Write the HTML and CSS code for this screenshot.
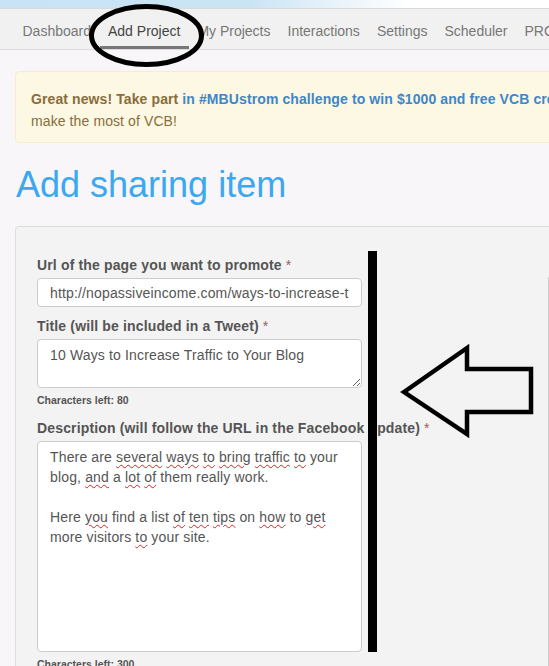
FILE: index.html
```html
<!DOCTYPE html>
<html lang="en">
<head>
  <meta charset="UTF-8">
  <title>Add sharing item</title>
  <link rel="stylesheet" href="styles.css">
</head>
<body>
  <div class="topstrip"></div>
  <nav class="menu">
    <ul>
      <li><a href="#">Dashboard</a></li>
      <li class="active"><a href="#">Add Project</a></li>
      <li><a href="#">My Projects</a></li>
      <li><a href="#">Interactions</a></li>
      <li><a href="#">Settings</a></li>
      <li><a href="#">Scheduler</a></li>
      <li><a href="#">PRO</a></li>
    </ul>
  </nav>

  <div class="page">
    <div class="notice">
      <b>Great news! Take part <a href="#">in #MBUstrom challenge to win $1000 and free VCB credits for the best tips on how to</a></b><br>
      make the most of VCB!
    </div>

    <h1>Add sharing item</h1>

    <div class="panel">
      <form class="form-col">
        <label>Url of the page you want to promote <span class="req">*</span></label>
        <input type="text" value="http://nopassiveincome.com/ways-to-increase-traffic-to-your-blog/">

        <label>Title (will be included in a Tweet) <span class="req">*</span></label>
        <textarea class="title-box">10 Ways to Increase Traffic to Your Blog</textarea>
        <div class="count">Characters left: 80</div>

        <label class="desc-label">Description (will follow the URL in the Facebook update) <span class="req">*</span></label>
        <div class="desc-box">
          There are <span class="typo">several</span> <span class="typo">ways</span> <span class="typo">to</span> <span class="typo">bring</span> <span class="typo">traffic</span> <span class="typo">to</span> your blog, <span class="typo">and</span> a <span class="typo">lot</span> <span class="typo">of</span> them really work.<br><br>
          Here <span class="typo">you</span> find a list <span class="typo">of</span> <span class="typo">ten</span> <span class="typo">tips</span> on <span class="typo">how</span> to <span class="typo">get</span> more visitors <span class="typo">to</span> your site.
        </div>
        <div class="count">Characters left: 300</div>
      </form>
      <div class="side-col">
        <div class="side-box"></div>
      </div>
    </div>
  </div>

  <!-- hand-drawn markup over the screenshot -->
  <svg class="marks" width="549" height="666" viewBox="0 0 549 666">
    <ellipse cx="146.5" cy="35.5" rx="55" ry="29" fill="none" stroke="#000" stroke-width="5"/>
    <rect x="368" y="251" width="9" height="401" fill="#000"/>
    <polygon points="404,392 467,348 467,369 531,369 531,412 467,412 467,434" fill="none" stroke="#000" stroke-width="4.5" stroke-linejoin="miter"/>
  </svg>
</body>
</html>
```

FILE: styles.css
```css
body {
  margin: 0;
  background: #f8f6f9;
  font-family: 'Liberation Sans', Arial, sans-serif;
  font-size: 14px;
  color: #555;
  overflow: hidden;
  position: relative;
}
.topstrip {
  height: 8px;
  background: linear-gradient(90deg, #c7e3f5 0%, #c9e4f5 45%, #e6f2fa 60%, #fff 75%);
}
.menu {
  background: #f1f1f1;
  border-top: 1px solid #d9d9d9;
  border-bottom: 1px solid #dcdcdc;
  width: 1200px;
}
.menu ul {
  list-style: none;
  margin: 0;
  padding: 0 0 0 14px;
  display: flex;
}
.menu li a {
  display: block;
  padding: 2px 8.5px 0;
  line-height: 40px;
  height: 40px;
  color: #777;
  text-decoration: none;
  box-sizing: border-box;
}
.menu li.active a {
  color: #444;
  border-bottom: 3px solid #777;
}
.page {
  width: 1140px;
  padding: 0 15px;
}
.notice {
  margin-top: 21px;
  background: #fcf8e3;
  border: 1px solid #faebcc;
  border-radius: 4px;
  color: #8a6d3b;
  padding: 16px 15px 10px 15px;
  line-height: 22px;
  letter-spacing: 0.1px;
}
.notice a {
  color: #3f86c7;
  text-decoration: none;
}
h1 {
  font-size: 36px;
  font-weight: 400;
  line-height: 40px;
  color: #3ba8f1;
  margin: 22px 0 21px 1px;
}
.panel {
  display: flex;
  background: #f3f3f3;
  border: 1px solid #ddd;
  border-radius: 4px;
  min-height: 600px;
}
.form-col {
  width: 325px;
  padding: 28px 0 0 21px;
}
label {
  display: block;
  font-weight: 700;
  font-size: 14px;
  letter-spacing: 0.15px;
  line-height: 20px;
  margin-bottom: 3px;
  color: #555;
  white-space: nowrap;
}
.req {
  color: #9b5c5c;
  font-weight: 400;
}
input, textarea, .desc-box {
  display: block;
  width: 100%;
  box-sizing: border-box;
  background: #fff;
  border: 1px solid #ccc;
  border-radius: 4px;
  font-family: inherit;
  font-size: 14px;
  letter-spacing: 0.15px;
  color: #555;
  padding: 5px 12px;
}
input {
  height: 29px;
  margin-bottom: 9px;
}
textarea.title-box {
  height: 49px;
  resize: vertical;
  line-height: 20px;
}
.desc-box {
  height: 211px;
  line-height: 20px;
  padding: 5px 12px;
  overflow: hidden;
}
.typo {
  text-decoration: underline wavy #e0201e;
  text-decoration-thickness: 1px;
  text-underline-offset: 2px;
}
.count {
  font-size: 10.5px;
  font-weight: 700;
  line-height: 12px;
  margin-top: 6px;
  color: #555;
}
.desc-label {
  margin-top: 12px;
}
.side-col {
  flex: 1;
  padding: 50px 0 0 186px;
}
.side-box {
  height: 500px;
  border-left: 1px solid #ccc;
  border-top: 1px solid #ddd;
}
.marks {
  position: absolute;
  left: 0;
  top: 0;
  pointer-events: none;
}
```
